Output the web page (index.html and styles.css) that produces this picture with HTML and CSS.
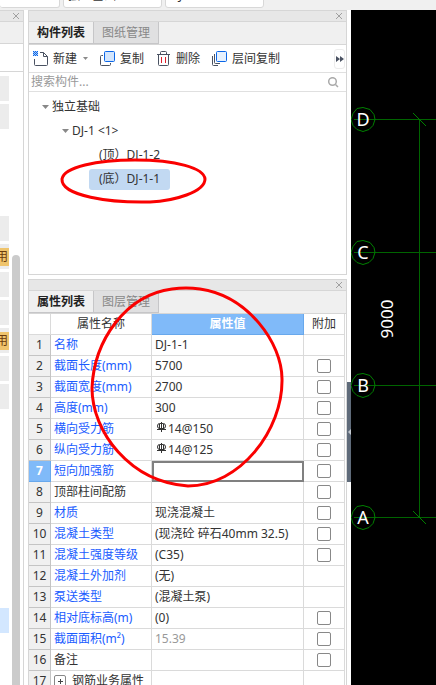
FILE: index.html
```html
<!DOCTYPE html>
<html lang="zh-CN">
<head>
    <meta charset="UTF-8">
    <meta name="viewport" content="width=device-width, initial-scale=1.0">
    <title>构件列表</title>
    <link rel="stylesheet" href="styles.css">
</head>
<body>
    <div class="top-bar">
        <input class="top-field first" type="text" aria-label="楼层">
        <input class="top-field" type="text" value="独立基础" aria-label="构件类型">
        <input class="top-field" type="text" value="DJ-1" aria-label="构件">
    </div>

    <div class="workspace">
        <aside class="nav-panel">
            <div class="title-bar">
                <button class="close-btn" aria-label="关闭"><svg width="8" height="8" viewBox="0 0 8 8"><path d="M1 1l6 6M7 1l-6 6"/></svg></button>
            </div>
            <div class="nav-head"></div>
            <div class="nav-tools"></div>
            <div class="nav-body">
                <div class="nav-list">
                    <div class="slot filled"></div>
                    <div class="slot filled"></div>
                    <div class="slot"></div>
                    <div class="slot"></div>
                    <div class="slot"></div>
                    <div class="slot filled"></div>
                    <div class="slot filled"><span class="tag">用</span></div>
                    <div class="slot filled"></div>
                    <div class="slot filled"></div>
                    <div class="slot filled"><span class="tag">用</span></div>
                    <div class="slot filled"></div>
                    <div class="slot filled"></div>
                    <div class="slot"></div>
                    <div class="slot"></div>
                    <div class="slot"></div>
                    <div class="slot"></div>
                    <div class="slot"></div>
                    <div class="slot"></div>
                    <div class="slot"></div>
                    <div class="slot current"></div>
                </div>
                <div class="scroll-track"><div class="scroll-thumb"></div></div>
            </div>
        </aside>

        <main class="panels">
            <section class="panel">
                <div class="title-bar">
                    <button class="close-btn" aria-label="关闭"><svg width="8" height="8" viewBox="0 0 8 8"><path d="M1 1l6 6M7 1l-6 6"/></svg></button>
                </div>
                <div class="tabs">
                    <button class="tab active">构件列表</button>
                    <button class="tab">图纸管理</button>
                </div>
                <div class="toolbar">
                    <button class="tool">
                        <svg width="16" height="16" viewBox="0 0 16 16">
                            <path d="M1.5 8v5.500q0 1 1 1h11q1 0 1-1V5.500l-4-4H7M10.500 1.500v4h4" fill="none" stroke="#4a5262"/>
                            <path d="M0 0h1v1H0zM2 0h1v1H2zM4 0h1v1H4zM1 1h1v1H1zM3 1h1v1H3zM0 2h1v1H0zM2 2h1v1H2zM4 2h1v1H4zM1 3h1v1H1zM3 3h1v1H3zM0 4h1v1H0zM2 4h1v1H2zM4 4h1v1H4z" fill="#0a66e8"/>
                            <path d="M0 0h5v5H0z" fill="#0a66e8" opacity=".35"/>
                        </svg>
                        <span>新建</span>
                        <svg class="drop" width="5" height="3" viewBox="0 0 5 3"><path d="M0 0h5L2.500 3z" fill="#8a8a8a"/></svg>
                    </button>
                    <button class="tool">
                        <svg width="16" height="16" viewBox="0 0 16 16">
                            <path d="M3 4.500H1.500q-1 0-1 1v8q0 1 1 1h8q1 0 1-1V12" fill="none" stroke="#4a5262"/>
                            <rect x="4.500" y=".5" width="10" height="10" rx="1" fill="#d3e5fc" stroke="#0a66e8"/>
                        </svg>
                        <span>复制</span>
                    </button>
                    <button class="tool">
                        <svg width="16" height="16" viewBox="0 0 16 16">
                            <path d="M1 3.500h13M4.500 3.500V1.500q0-1 1-1h4q1 0 1 1v2M2.500 3.500v10q0 1 1 1h8q1 0 1-1v-10" fill="none" stroke="#4a5262"/>
                            <path d="M5.500 6v6M9.500 6v6" stroke="#e0202c"/>
                        </svg>
                        <span>删除</span>
                    </button>
                    <button class="tool">
                        <svg width="16" height="16" viewBox="0 0 16 16">
                            <path d="M.5 5v8.500q0 1 1 1H6M2.500 3v8.500q0 1 1 1H8" fill="none" stroke="#4a5262"/>
                            <rect x="4.500" y=".5" width="10" height="10" rx="1" fill="#e6f1fe" stroke="#0a66e8"/>
                        </svg>
                        <span>层间复制</span>
                    </button>
                    <button class="more-btn" aria-label="更多"><svg width="8" height="6" viewBox="0 0 8 6"><path d="M0 0l4 3-4 3zM4 0l4 3-4 3z" fill="#4a5262"/></svg></button>
                </div>
                <div class="search">
                    <input type="text" placeholder="搜索构件..." aria-label="搜索构件">
                    <svg width="11" height="11" viewBox="0 0 11 11"><circle cx="4.500" cy="4.500" r="3.800"/><path d="M7.500 7.500l2.500 2.500"/></svg>
                </div>
                <ul class="tree">
                    <li class="level-1"><svg width="7" height="4" viewBox="0 0 7 4"><path d="M0 0h7L3.500 4z"/></svg><span>独立基础</span></li>
                    <li class="level-2"><svg width="7" height="4" viewBox="0 0 7 4"><path d="M0 0h7L3.500 4z"/></svg><span>DJ-1 &lt;1&gt;</span></li>
                    <li class="level-3"><span class="node">(顶）DJ-1-2</span></li>
                    <li class="level-3"><span class="node selected">(底）DJ-1-1</span></li>
                </ul>
            </section>

            <section class="panel properties">
                <div class="title-bar">
                    <button class="close-btn" aria-label="关闭"><svg width="8" height="8" viewBox="0 0 8 8"><path d="M1 1l6 6M7 1l-6 6"/></svg></button>
                </div>
                <div class="tabs">
                    <button class="tab active">属性列表</button>
                    <button class="tab">图层管理</button>
                </div>
                <table class="grid">
                    <colgroup><col class="col-no"><col class="col-name"><col><col class="col-extra"></colgroup>
                    <thead>
                        <tr><th></th><th>属性名称</th><th class="value-head">属性值</th><th>附加</th></tr>
                    </thead>
                    <tbody>
                        <tr><th>1</th><td class="key">名称</td><td>DJ-1-1</td><td></td></tr>
                        <tr><th>2</th><td class="key">截面长度(mm)</td><td>5700</td><td><input type="checkbox" aria-label="截面长度附加"></td></tr>
                        <tr><th>3</th><td class="key">截面宽度(mm)</td><td>2700</td><td><input type="checkbox" aria-label="截面宽度附加"></td></tr>
                        <tr><th>4</th><td class="key">高度(mm)</td><td>300</td><td><input type="checkbox" aria-label="高度附加"></td></tr>
                        <tr><th>5</th><td class="key">横向受力筋</td><td><svg class="rebar" width="10" height="11" viewBox="0 0 10 11"><path d="M4.500 0v10M0 7.500h9M2.500 1.500h4q2 0 2 2.500t-2 2.500h-4q-2 0-2-2.500t2-2.500M2.500 2v5M6.500 2v5"/></svg>14@150</td><td><input type="checkbox" aria-label="横向受力筋附加"></td></tr>
                        <tr><th>6</th><td class="key">纵向受力筋</td><td><svg class="rebar" width="10" height="11" viewBox="0 0 10 11"><path d="M4.500 0v10M0 7.500h9M2.500 1.500h4q2 0 2 2.500t-2 2.500h-4q-2 0-2-2.500t2-2.500M2.500 2v5M6.500 2v5"/></svg>14@125</td><td><input type="checkbox" aria-label="纵向受力筋附加"></td></tr>
                        <tr class="editing"><th>7</th><td class="key">短向加强筋</td><td class="edit-cell"><input class="cell-input" type="text" aria-label="短向加强筋"></td><td><input type="checkbox" aria-label="短向加强筋附加"></td></tr>
                        <tr><th>8</th><td>顶部柱间配筋</td><td></td><td><input type="checkbox" aria-label="顶部柱间配筋附加"></td></tr>
                        <tr><th>9</th><td class="key">材质</td><td>现浇混凝土</td><td><input type="checkbox" aria-label="材质附加"></td></tr>
                        <tr><th>10</th><td class="key">混凝土类型</td><td>(现浇砼 碎石40mm 32.5)</td><td><input type="checkbox" aria-label="混凝土类型附加"></td></tr>
                        <tr><th>11</th><td class="key">混凝土强度等级</td><td>(C35)</td><td><input type="checkbox" aria-label="混凝土强度等级附加"></td></tr>
                        <tr><th>12</th><td class="key">混凝土外加剂</td><td>(无)</td><td></td></tr>
                        <tr><th>13</th><td class="key">泵送类型</td><td>(混凝土泵)</td><td></td></tr>
                        <tr><th>14</th><td class="key">相对底标高(m)</td><td>(0)</td><td><input type="checkbox" aria-label="相对底标高附加"></td></tr>
                        <tr><th>15</th><td class="key">截面面积(m²)</td><td class="readonly">15.39</td><td><input type="checkbox" aria-label="截面面积附加"></td></tr>
                        <tr><th>16</th><td>备注</td><td></td><td><input type="checkbox" aria-label="备注附加"></td></tr>
                        <tr><th>17</th><td><div class="group"><button class="expand-btn" aria-label="展开"><svg width="7" height="7" viewBox="0 0 7 7"><path d="M1 3.500h5M3.500 1v5" stroke="#444"/></svg></button>钢筋业务属性</div></td><td></td><td></td></tr>
                    </tbody>
                </table>
            </section>
        </main>

        <div class="splitter"><button class="split-handle" aria-label="收起"><svg width="3" height="6" viewBox="0 0 3 6"><path d="M3 0v6L0 3z" fill="#c3c9d0"/></svg></button></div>

        <!-- axis grid of the drawing -->
        <div class="drawing">
            <svg width="100%" height="675">
                <g class="axis">
                    <path d="M3 109.500H2000M3 242.500H2000M3 375.500H2000M3 507.500H2000M68.500 109v399"/>
                </g>
                <g class="axis-mark">
                    <path d="M62 103l13 13M62 501l13 13"/>
                    <path id="bubble" d="M12 97.500l7 2 4 5 1 5-2 6-4 4-6 2-6-2-4-4-2-6 2-6 4-5z"/>
                    <use href="#bubble" y="133"/>
                    <use href="#bubble" y="266"/>
                    <use href="#bubble" y="398"/>
                </g>
                <g class="axis-text">
                    <text x="12" y="116">D</text>
                    <text x="12" y="249">C</text>
                    <text x="12" y="382">B</text>
                    <text x="12" y="514">A</text>
                    <text class="dimension" transform="translate(42 309) rotate(-90)">9000</text>
                </g>
            </svg>
        </div>
    </div>

    <!-- red pen marks -->
    <svg class="marks" width="300" height="500" viewBox="0 0 300 500">
        <path d="M62 179C64 167 97 160 135 160C176 160 204 168 205 179C205 192 174 201 150 202C110 203 61 196 62 179z"/>
        <path d="M172 289Q186 287 200 289C248 296 282 343 282 379C283 430 240 486 188 486C130 482 92 432 92 388C94 340 126 295 172 289z"/>
    </svg>
</body>
</html>
```

FILE: styles.css
```css
* {
    box-sizing: border-box;
}

body {
    margin: 0;
    height: 100vh;
    display: flex;
    flex-direction: column;
    position: relative;
    overflow: hidden;
    background-color: #fff;
    color: #333;
    font-family: 'Noto Sans', 'Noto Sans CJK SC', sans-serif;
    font-size: 12px;
    line-height: 18px;
}

button, input {
    font: inherit;
    color: inherit;
    margin: 0;
    padding: 0;
    border: none;
    background: none;
}

svg {
    display: block;
    flex: none;
}

.top-bar {
    flex: none;
    height: 10px;
    display: flex;
    align-items: flex-end;
    gap: 3px;
    padding-bottom: 2px;
    overflow: hidden;
    background-color: #f0f0f0;
}

.top-field {
    width: 99px;
    height: 26px;
    padding: 0 4px;
    border: 1px solid #d8d8d8;
    border-radius: 3px;
    background-color: #fff;
}

.top-field.first {
    width: 60px;
    border-left: none;
}

.workspace {
    flex: 1;
    min-height: 0;
    display: flex;
}

.title-bar {
    flex: none;
    height: 12px;
    display: flex;
    align-items: center;
    justify-content: flex-end;
    padding-right: 3px;
    border-top: 1px solid #d6d6d6;
    border-bottom: 1px solid #d6d6d6;
    background-color: #e7e7e7;
}

.close-btn svg {
    fill: none;
    stroke: #a0a0a0;
}

/* left navigation */
.nav-panel {
    flex: none;
    width: 24px;
    display: flex;
    flex-direction: column;
    border-right: 1px solid #d6d6d6;
}

.nav-head {
    height: 22px;
    border-bottom: 1px solid #d6d6d6;
    background-color: #f0f0f0;
}

.nav-tools {
    height: 28px;
    border-bottom: 1px solid #d6d6d6;
}

.nav-body {
    flex: 1;
    display: flex;
    gap: 3px;
}

.nav-list {
    width: 9px;
    display: flex;
    flex-direction: column;
    gap: 3px;
    padding-top: 4px;
}

.slot {
    height: 25px;
    display: flex;
    align-items: center;
    justify-content: flex-end;
    overflow: hidden;
}

.slot.filled {
    background-color: #ececec;
}

.slot.current {
    background-color: #d3e7ff;
}

.tag {
    flex: none;
    padding: 0 1px;
    background-color: #efc46c;
    color: #6b3a0c;
}

.scroll-track {
    width: 8px;
    padding-top: 183px;
    display: flex;
}

.scroll-thumb {
    flex: 1;
    border-radius: 4px 4px 0 0;
    background-color: #cbcbcb;
}

/* docked panels */
.panels {
    flex: 1;
    min-width: 0;
    display: flex;
    flex-direction: column;
    gap: 4px;
    padding-left: 4px;
}

.panel {
    flex: none;
    border: 1px solid #d6d6d6;
    border-top: none;
}

.panel.properties {
    flex: 1;
    min-height: 0;
    overflow: hidden;
    border-bottom: none;
}

.tabs {
    display: flex;
    height: 23px;
    border-bottom: 1px solid #d6d6d6;
    background-color: #f0f0f0;
}

.tab {
    width: 65px;
    border-right: 1px solid #c6c6c8;
    border-bottom: 1px solid #c6c6c8;
    background-color: #e0e0e1;
    color: #888;
}

.tab.active {
    background-color: #f0f0f0;
    color: #222;
    font-weight: bold;
}

.toolbar {
    display: flex;
    align-items: center;
    gap: 12px;
    height: 28px;
    padding: 0 1px 0 4px;
    border-bottom: 1px solid #e0e0e0;
}

.tool {
    flex: none;
    display: flex;
    align-items: center;
    gap: 4px;
    white-space: nowrap;
}

.drop {
    margin-left: 2px;
}

.more-btn {
    width: 11px;
    height: 20px;
    margin-left: auto;
    display: flex;
    align-items: center;
    justify-content: center;
    border: 1px solid #ececec;
    border-radius: 3px;
}

.search {
    display: flex;
    align-items: center;
    height: 19px;
    padding: 0 7px 0 2px;
    border-bottom: 1px solid #e0e0e0;
}

.search input {
    flex: 1;
    min-width: 0;
    height: 18px;
}

.search input::placeholder {
    color: #999;
    opacity: 1;
}

.search svg {
    fill: none;
    stroke: #aaa;
    stroke-width: 1.5;
}

.tree {
    list-style: none;
    margin: 0;
    padding: 3px 0;
    min-height: 182px;
}

.tree li {
    height: 24px;
    display: flex;
    align-items: center;
    gap: 3px;
}

.tree svg {
    fill: #888;
}

.level-1 {
    padding-left: 13px;
}

.level-2 {
    padding-left: 33px;
}

.level-3 {
    padding-left: 60px;
}

.node {
    height: 21px;
    padding: 0 10px;
    border-radius: 3px;
    line-height: 20px;
}

.node.selected {
    background-color: #c2d9f2;
}

/* property table */
.grid {
    width: calc(100% - 1px);
    table-layout: fixed;
    border-collapse: separate;
    border-spacing: 0;
}

.col-no {
    width: 22px;
}

.col-name {
    width: 101px;
}

.col-extra {
    width: 41px;
}

.grid th, .grid td {
    height: 21px;
    padding: 0 0 0 3px;
    border-right: 1px solid #dadada;
    border-bottom: 1px solid #dadada;
    line-height: 18px;
    text-align: left;
    white-space: nowrap;
    overflow: hidden;
}

.grid th {
    padding: 0;
    font-weight: normal;
    text-align: center;
}

.grid tbody th {
    border-color: #c4c4c4;
    background-color: #f0f0f0;
}

.grid .value-head {
    border-color: #68a8ec;
    background-color: #80baf9;
    color: #fff;
    font-weight: bold;
}

.grid .key {
    color: #1a5cff;
}

.grid .readonly {
    color: #999;
}

.grid .editing th {
    border-color: #68a8ec;
    background-color: #80baf9;
    color: #fff;
    font-weight: bold;
}

.grid .edit-cell {
    padding: 0;
    border: 2px solid #808080;
}

.cell-input {
    display: block;
    width: 100%;
    height: 17px;
    outline: none;
}

.grid td:last-child {
    padding: 0;
}

.grid input[type="checkbox"] {
    appearance: none;
    display: block;
    width: 14px;
    height: 14px;
    margin: 0 auto;
    border: 1px solid #888;
    border-radius: 2px;
    background-color: #fff;
}

.rebar {
    display: inline-block;
    margin: 0 1px 0 2px;
    fill: none;
    stroke: #333;
}

.group {
    display: flex;
    align-items: center;
    gap: 6px;
}

.expand-btn {
    width: 12px;
    height: 12px;
    display: flex;
    align-items: center;
    justify-content: center;
    border: 1px solid #888;
    border-radius: 2px;
}

.splitter {
    flex: none;
    width: 4px;
    display: flex;
    flex-direction: column;
    padding-top: 372px;
}

.split-handle {
    height: 100px;
    display: flex;
    align-items: center;
    justify-content: center;
    background-color: #5f6b7a;
}

.drawing {
    flex: none;
    width: 85px;
    overflow: hidden;
    background-color: #000;
}

.axis {
    fill: none;
    stroke: #006400;
}

.axis-mark {
    fill: none;
    stroke: #008000;
}

.axis-text {
    fill: #fff;
    font-size: 18px;
    text-anchor: middle;
}

.dimension {
    font-size: 17px;
}

.marks {
    position: absolute;
    top: 0;
    left: 0;
    fill: none;
    stroke: #fa0000;
    stroke-width: 3;
    pointer-events: none;
}
```
